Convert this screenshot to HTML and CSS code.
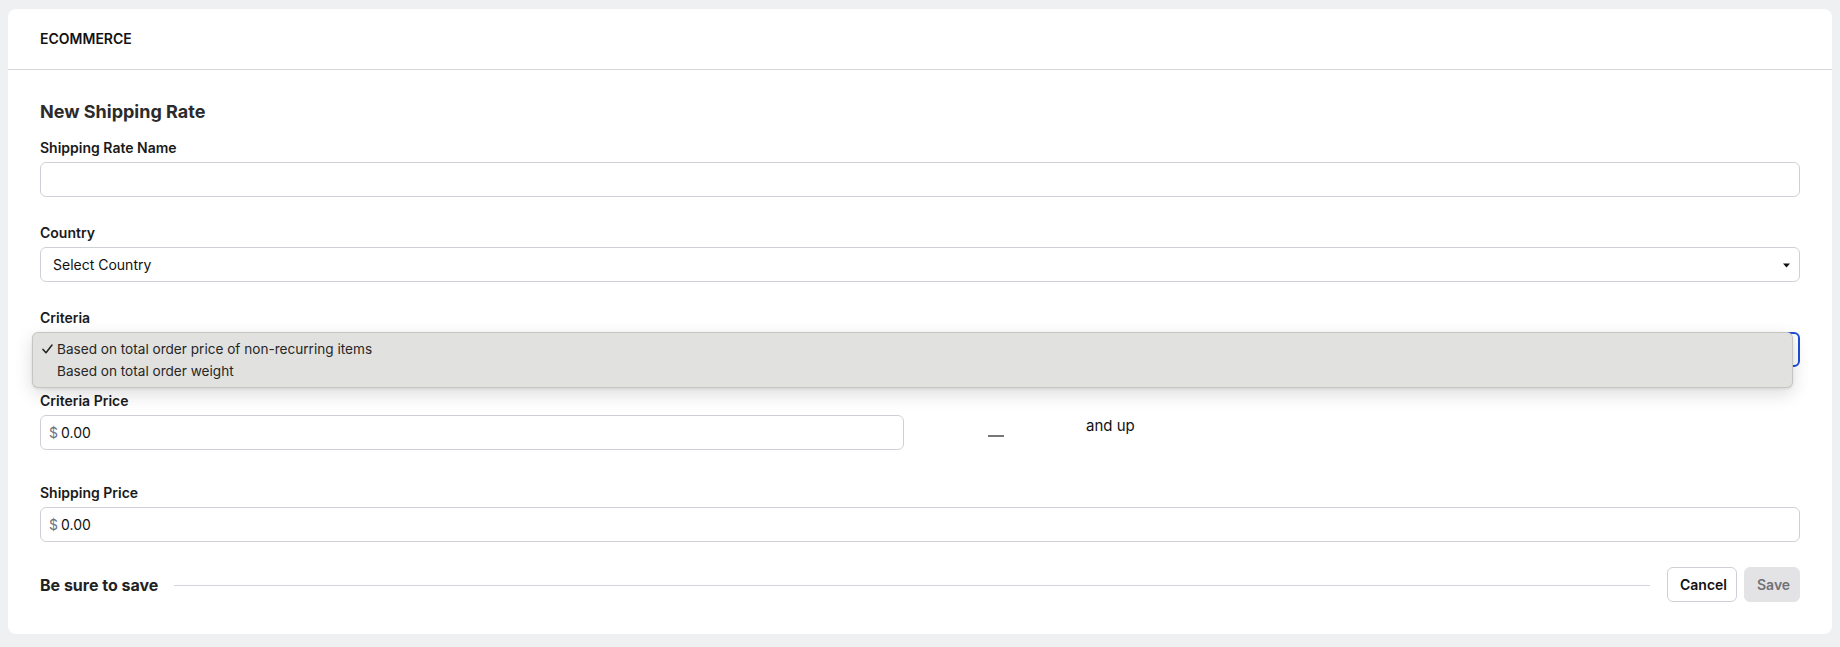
FILE: index.html
```html
<!DOCTYPE html>
<html lang="en">
<head>
<meta charset="utf-8">
<title>Ecommerce - New Shipping Rate</title>
<link rel="stylesheet" href="styles.css">
</head>
<body>
<div class="card">
  <div class="card-header">ECOMMERCE</div>
  <div class="card-body">
    <h2 class="title">New Shipping Rate</h2>

    <div class="group g-26">
      <label class="label">Shipping Rate Name</label>
      <div class="control"></div>
    </div>

    <div class="group g-26">
      <label class="label">Country</label>
      <div class="control select">
        <span>Select Country</span>
        <svg class="caret" width="7" height="5" viewBox="0 0 7 5"><polygon points="0,0.5 7,0.5 3.5,4.5" fill="#111"/></svg>
      </div>
    </div>

    <div class="group g-24">
      <label class="label">Criteria</label>
      <div class="select-wrap">
        <div class="control select focused"></div>
        <div class="menu">
          <div class="menu-item">
            <svg class="check" width="11" height="10" viewBox="0 0 11 10"><path d="M1 5.4 L4 8.8 L10 1" fill="none" stroke="#222" stroke-width="1.5" stroke-linecap="round" stroke-linejoin="round"/></svg>
            <span>Based on total order price of non-recurring items</span>
          </div>
          <div class="menu-item">
            <span>Based on total order weight</span>
          </div>
        </div>
      </div>
    </div>

    <div class="group g-33 price-row">
      <div class="price-col">
        <label class="label">Criteria Price</label>
        <div class="control money"><span class="cur">$</span><span>0.00</span></div>
      </div>
      <div class="sep"><span class="dash"></span></div>
      <div class="and-up">and up</div>
    </div>

    <div class="group g-25">
      <label class="label">Shipping Price</label>
      <div class="control money"><span class="cur">$</span><span>0.00</span></div>
    </div>

    <div class="footer">
      <span class="save-note">Be sure to save</span>
      <span class="rule"></span>
      <div class="actions">
        <button class="btn btn-cancel">Cancel</button>
        <button class="btn btn-save">Save</button>
      </div>
    </div>
  </div>
</div>
</body>
</html>
```

FILE: styles.css
```css
* { box-sizing: border-box; }

html, body {
  margin: 0;
  background: #eff0f2;
  font-family: Inter, "Noto Sans", sans-serif;
  color: #1a1a1a;
}

body {
  padding: 9px 8px 12px;
}

.card {
  background: #ffffff;
  border-radius: 8px;
}

.card-header {
  height: 61px;
  padding: 0 32px 1px;
  display: flex;
  align-items: center;
  border-bottom: 1px solid #d5d7db;
  font-size: 14px;
  font-weight: 600;
  color: #111;
}

.card-body {
  padding: 30px 32px 32px;
}

.title {
  margin: 0 0 14px;
  font-size: 18px;
  line-height: 24px;
  font-weight: 700;
  color: #2b2b2b;
}

.group { display: block; }
.g-24 { margin-bottom: 24px; }
.g-25 { margin-bottom: 25px; }
.g-26 { margin-bottom: 26px; }
.g-33 { margin-bottom: 33px; }

.label {
  display: block;
  font-size: 14px;
  line-height: 20px;
  font-weight: 600;
  color: #1a1a1a;
  margin-bottom: 4px;
}

.control {
  height: 35px;
  border: 1px solid #cdd1d7;
  border-radius: 6px;
  background: #fff;
  padding: 0 12px;
  display: flex;
  align-items: center;
  font-size: 14px;
  color: #111;
}

.select {
  justify-content: space-between;
}

.caret {
  margin-right: -3px;
  margin-top: 1px;
}

.select-wrap {
  position: relative;
}

.focused {
  border: 2px solid #1d4ed8;
}

.menu {
  position: absolute;
  top: 0;
  left: -8px;
  right: 7px;
  padding: 5px 0;
  background: #e1e1df;
  border: 1px solid rgba(0, 0, 0, 0.12);
  border-radius: 6px;
  box-shadow: 0 6px 18px rgba(0, 0, 0, 0.14), 0 1px 3px rgba(0, 0, 0, 0.08);
}

.menu-item {
  position: relative;
  height: 22px;
  display: flex;
  align-items: center;
  padding-left: 24px;
  font-family: Inter, "Noto Sans", sans-serif;
  font-size: 13.6px;
  color: #262626;
}

.check {
  position: absolute;
  left: 9px;
  top: 6px;
}

.price-row {
  display: flex;
  align-items: flex-start;
}

.price-col {
  flex: 0 0 calc(50% - 16px);
}

.sep {
  flex: 0 0 120px;
  margin-left: 32px;
  padding-top: 44px;
  display: flex;
  justify-content: center;
}

.dash {
  display: block;
  width: 16px;
  height: 2px;
  background: #777;
}

.and-up {
  margin-left: 30px;
  padding-top: 25px;
  font-size: 15px;
  line-height: 20px;
  color: #111;
}

.money .cur {
  color: #6b7280;
  margin-left: -4px;
  margin-right: 3px;
}

.footer {
  display: flex;
  align-items: center;
}

.save-note {
  font-size: 16px;
  font-weight: 700;
  color: #222;
}

.rule {
  flex: 1;
  height: 1px;
  background: #d1d5db;
  margin: 2px 17px 0 16px;
}

.actions {
  display: flex;
  gap: 7px;
}

.btn {
  height: 35px;
  border-radius: 6px;
  font-family: Inter, "Noto Sans", sans-serif;
  font-size: 14px;
  font-weight: 600;
  padding: 0 12px;
  cursor: pointer;
}

.btn-cancel {
  width: 70px;
  background: #fff;
  border: 1px solid #cdd1d7;
  color: #111;
}

.btn-save {
  width: 56px;
  background: #e3e3e5;
  border: 1px solid #e3e3e5;
  color: #717177;
}
```
